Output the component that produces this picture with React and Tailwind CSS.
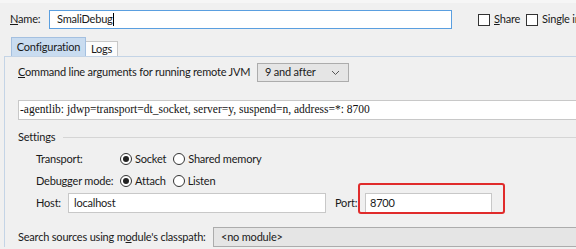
import React from "react";

const Radio = ({ checked, label }) => (
  <div className="flex items-center shrink-0">
    <span className="w-[12px] h-[12px] rounded-full border border-[#333] bg-white flex items-center justify-center shrink-0">
      {checked && <span className="w-[6px] h-[6px] rounded-full bg-[#222]" />}
    </span>
    <span className="ml-[3px] whitespace-nowrap">{label}</span>
  </div>
);

const Check = ({ children }) => (
  <div className="flex items-center shrink-0">
    <span className="w-[12px] h-[12px] border border-[#333] bg-white shrink-0" />
    <span className="ml-[4px] whitespace-nowrap">{children}</span>
  </div>
);

const App = () => {
  return (
    <div
      className="w-[576px] h-[249px] bg-[#f0f0f0] overflow-hidden text-[11px] tracking-[-0.2px] text-[#1a1a1a] relative"
      style={{ fontFamily: 'Lato, "Noto Sans", sans-serif' }}
    >
      <div className="h-[3px] bg-[#f6f6f6]" />
      {/* name row */}
      <div className="flex items-center h-[19px] mt-[7px] pl-[10px]">
        <span className="w-[39px] shrink-0">
          <span className="underline">N</span>ame:
        </span>
        <div className="w-[403px] h-[19px] shrink-0 border border-[#5a9fe0] bg-white flex items-center pl-[7px]">
          SmaliDebug<span className="w-px h-[13px] bg-black" />
        </div>
        <div className="ml-[26px] shrink-0">
          <Check>
            <span className="underline">S</span>hare
          </Check>
        </div>
        <div className="ml-[6px] shrink-0">
          <Check>Single instance only</Check>
        </div>
      </div>

      {/* tabs */}
      <div className="flex items-end h-[19px] mt-[8px] pl-[11px]">
        <div className="h-[19px] w-[75px] shrink-0 bg-[#c9dcf0] border border-b-0 border-[#a4c0e0] flex items-center justify-center">
          Configuration
        </div>
        <div className="h-[15px] w-[32px] shrink-0 bg-[#fcfcfc] border border-l-0 border-b-0 border-[#c8c8c8] flex items-center justify-center">
          Logs
        </div>
      </div>

      {/* panel */}
      <div className="ml-[4px] border-t border-l border-[#c4d4e6] pl-[13px]">
        <div className="flex items-center h-[19px] mt-[6px]">
          <span className="w-[239px] shrink-0 whitespace-nowrap">
            <span className="underline">C</span>ommand line arguments for running remote JVM
          </span>
          <div className="w-[92px] h-[19px] shrink-0 bg-[#e5e5e5] border border-[#acacac] flex items-center justify-between pl-[7px] pr-[8px]">
            <span>9 and after</span>
            <svg width="9" height="6" viewBox="0 0 9 6">
              <path d="M1 1 L4.5 4.5 L8 1" fill="none" stroke="#555" strokeWidth="1" />
            </svg>
          </div>
        </div>

        <div
          className="mt-[18px] h-[20px] bg-white border border-[#c8c8c8] border-r-0 flex items-center pl-[1px] whitespace-nowrap text-[11.5px] tracking-normal text-[#111]"
          style={{ fontFamily: '"Liberation Serif", serif' }}
        >
          -agentlib: jdwp=transport=dt_socket, server=y, suspend=n, address=*: 8700
        </div>

        <div className="flex items-center mt-[9px] h-[16px]">
          <span>Settings</span>
          <span className="flex-1 h-px bg-[#d5d5d5] ml-[8px]" />
        </div>

        <div className="pl-[18px]">
          <div className="flex items-center h-[16px] mt-[6px]">
            <span className="w-[84px] shrink-0 whitespace-nowrap">Transport:</span>
            <Radio checked label="Socket" />
            <div className="ml-[7px] shrink-0">
              <Radio label="Shared memory" />
            </div>
          </div>
          <div className="flex items-center h-[16px] mt-[6px]">
            <span className="w-[84px] shrink-0 whitespace-nowrap">Debugger mode:</span>
            <Radio checked label="Attach" />
            <div className="ml-[7px] shrink-0">
              <Radio label="Listen" />
            </div>
          </div>
          <div className="flex items-center h-[20px] mt-[4px]">
            <span className="w-[32px] shrink-0">Host:</span>
            <div className="w-[258px] h-[20px] shrink-0 bg-white border border-[#c8c8c8] flex items-center pl-[5px]">
              localhost
            </div>
            <span className="ml-[9px] w-[30px] shrink-0">Port:</span>
            <div className="relative shrink-0">
              <div className="w-[127px] h-[20px] bg-white border border-[#c8c8c8] flex items-center pl-[4px]">
                8700
              </div>
              <div className="absolute left-[-7px] top-[-10px] w-[147px] h-[31px] border-2 border-[#e02b2b] rounded-[3px]" />
            </div>
          </div>
        </div>

        <div className="flex items-center h-[20px] mt-[14px]">
          <span className="w-[195px] shrink-0 whitespace-nowrap">
            Search sources using m<span className="underline">o</span>dule's classpath:
          </span>
          <div className="flex-1 h-[20px] bg-[#e5e5e5] border border-[#acacac] border-r-0 flex items-center pl-[7px]">
            &lt;no module&gt;
          </div>
        </div>
      </div>
    </div>
  );
};

export default App;
